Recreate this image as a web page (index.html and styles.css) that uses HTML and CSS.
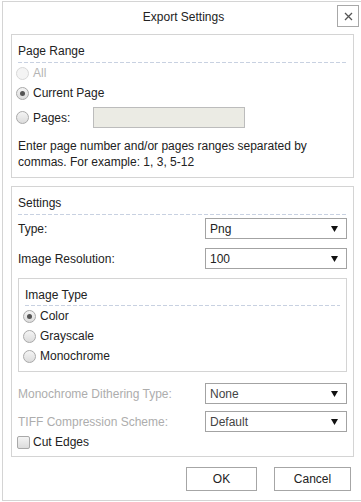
FILE: index.html
```html
<html>
<head>
    <link rel="stylesheet" href="styles.css">
</head>
<body>
    <div class="dialog">
        <div class="dialog-head">
            <div class="dialog-title">Export Settings</div>
            <button class="close-btn">
                <svg width="9" height="9" viewBox="0 0 9 9"><path d="M1 1 L8 8 M8 1 L1 8" stroke="#555" stroke-width="1.3" fill="none"/></svg>
            </button>
        </div>

        <!-- Page Range -->
        <div class="group">
            <div class="group-head">Page Range</div>
            <div class="radio-row disabled"><span class="radio"></span>All</div>
            <div class="radio-row"><span class="radio checked"></span>Current Page</div>
            <div class="radio-row pages-row"><span class="radio"></span><span class="pages-label">Pages:</span><span class="pages-input"></span></div>
            <p class="help">Enter page number and/or pages ranges separated by commas. For example: 1, 3, 5-12</p>
        </div>

        <!-- Settings -->
        <div class="group settings">
            <div class="group-head">Settings</div>
            <div class="settings-body">
                <div class="field-row row-type">
                    <span>Type:</span>
                    <div class="select"><span>Png</span><svg width="7" height="6" viewBox="0 0 7 6"><polygon points="0,0 7,0 3.5,6" fill="#111"/></svg></div>
                </div>
                <div class="field-row row-res">
                    <span>Image Resolution:</span>
                    <div class="select"><span>100</span><svg width="7" height="6" viewBox="0 0 7 6"><polygon points="0,0 7,0 3.5,6" fill="#111"/></svg></div>
                </div>

                <div class="group image-type">
                    <div class="group-head">Image Type</div>
                    <div class="radio-row"><span class="radio checked"></span>Color</div>
                    <div class="radio-row"><span class="radio"></span>Grayscale</div>
                    <div class="radio-row"><span class="radio"></span>Monochrome</div>
                </div>

                <div class="field-row row-dither disabled">
                    <span>Monochrome Dithering Type:</span>
                    <div class="select"><span>None</span><svg width="7" height="6" viewBox="0 0 7 6"><polygon points="0,0 7,0 3.5,6" fill="#111"/></svg></div>
                </div>
                <div class="field-row row-tiff disabled">
                    <span>TIFF Compression Scheme:</span>
                    <div class="select"><span>Default</span><svg width="7" height="6" viewBox="0 0 7 6"><polygon points="0,0 7,0 3.5,6" fill="#111"/></svg></div>
                </div>
                <div class="check-row"><span class="checkbox"></span>Cut Edges</div>
            </div>
        </div>

        <div class="buttons">
            <button class="btn btn-ok">OK</button>
            <button class="btn btn-cancel">Cancel</button>
        </div>
    </div>
</body>
</html>
```

FILE: styles.css
```css
body {
    margin: 0;
    background: #fff;
    font-family: "Liberation Sans", Arial, sans-serif;
    font-size: 12px;
    line-height: 16px;
    color: #222;
}

.dialog {
    box-sizing: border-box;
    width: 360px;
    height: 500px;
    margin: 1px 0 0 2px;
    border: 1px solid #d4d4d4;
}

.dialog-head {
    box-sizing: border-box;
    height: 32px;
    display: grid;
    grid-template-columns: 1fr auto 1fr;
    align-items: start;
    padding: 3px 2px 0 5px;
}

.dialog-title {
    grid-column: 2;
    margin-top: 4px;
}

.close-btn {
    grid-column: 3;
    justify-self: end;
    box-sizing: border-box;
    width: 22px;
    height: 22px;
    padding: 0;
    border: 1px solid #a8a8a8;
    background: #fff;
    display: flex;
    align-items: center;
    justify-content: center;
}

.group {
    margin: 0 7px 0 8px;
    border: 1px solid #d4d4d4;
}

.settings {
    margin-top: 8px;
}

.group-head {
    margin: 0 6px;
    padding: 8px 0 4px;
    background-image: linear-gradient(to right, #c8d1e1 4px, transparent 4px);
    background-size: 6px 1px;
    background-repeat: repeat-x;
    background-position: left bottom;
}

.radio-row {
    display: flex;
    align-items: center;
    height: 20px;
    padding-left: 4px;
}

.radio {
    flex: none;
    box-sizing: border-box;
    width: 13px;
    height: 13px;
    margin-right: 4px;
    border-radius: 50%;
    border: 1px solid #a9a9a9;
    background: linear-gradient(#f4f4f4, #dcdcdc);
    display: flex;
    align-items: center;
    justify-content: center;
}

.radio.checked::after {
    content: "";
    width: 5px;
    height: 5px;
    border-radius: 50%;
    background: #555;
}

.radio-row.disabled {
    color: #b4b4b4;
}

.radio-row.disabled .radio {
    border-color: #d8d8d8;
    background: #f4f4f4;
}

.pages-row {
    height: 29px;
}

.pages-label {
    width: 60px;
}

.pages-input {
    box-sizing: border-box;
    width: 152px;
    height: 21px;
    border: 1px solid #bcbcbc;
    background: #ebebe4;
}

.help {
    margin: 0;
    padding: 6px 6px 7px;
}

.settings-body {
    padding: 0 6px 4px;
}

.field-row {
    display: flex;
    align-items: center;
    justify-content: space-between;
    height: 21px;
}

.row-type { margin-top: 3px; }
.row-res { margin-top: 9px; }
.row-dither { margin-top: 11px; }
.row-tiff { margin-top: 7px; }

.field-row.disabled > span {
    color: #adadad;
}

.select {
    box-sizing: border-box;
    width: 142px;
    height: 21px;
    border: 1px solid #a3a3a3;
    background: #fff;
    display: flex;
    align-items: center;
    justify-content: space-between;
    padding: 0 8px 0 4px;
}

.field-row.disabled .select span {
    color: #444;
}

.image-type {
    margin: 9px 0 0;
}

.image-type .group-head {
    padding-bottom: 3px;
}

.image-type .radio-row:last-child {
    margin-bottom: 5px;
}

.check-row {
    display: flex;
    align-items: center;
    height: 20px;
    margin-left: -1px;
}

.checkbox {
    box-sizing: border-box;
    width: 13px;
    height: 13px;
    margin-right: 3px;
    border: 1px solid #a9a9a9;
    border-radius: 2px;
    background: linear-gradient(#f4f4f4, #dcdcdc);
}

.buttons {
    display: flex;
    justify-content: flex-end;
    gap: 17px;
    margin-top: 10px;
    padding-right: 10px;
}

.btn {
    box-sizing: border-box;
    height: 24px;
    padding: 0;
    border: 1px solid #a6a6a6;
    background: #fff;
    font: inherit;
    color: #222;
}

.btn-ok { width: 71px; }
.btn-cancel { width: 77px; }
```
